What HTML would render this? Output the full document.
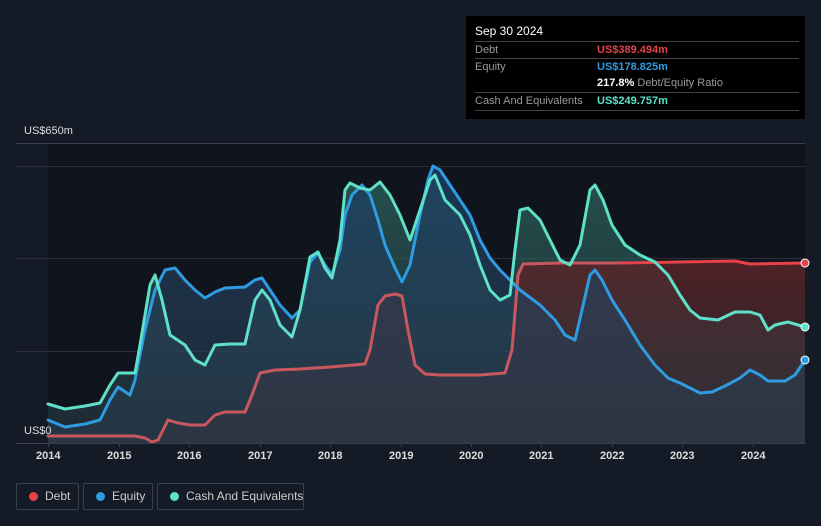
<!DOCTYPE html>
<html><head><meta charset="utf-8"><style>
body{margin:0;width:821px;height:526px;background:#151b26;font-family:"Liberation Sans",sans-serif;overflow:hidden;position:relative}
.tt{position:absolute;left:466px;top:16px;width:339px;height:103px;background:#000;color:#fff;font-size:11px}
.tt .h{position:absolute;left:9px;top:8px;font-size:12px}
.tt .r{position:absolute;left:9px;width:324px;border-top:1px solid #444;height:17px;line-height:17px;color:#999;white-space:nowrap}
.tt .v{position:absolute;left:122px;top:0;font-weight:bold}
.leg{position:absolute;top:483px;height:27px;border:1px solid #3a404a;border-radius:2px;color:#ccc;font-size:12px;line-height:25px;box-sizing:border-box;white-space:nowrap}
.leg i{position:absolute;left:12px;top:8px;width:9px;height:9px;border-radius:50%}
.leg span{position:absolute;left:28px;top:0}
.ax{position:absolute;top:450px;color:#ddd;font-size:11px;font-weight:bold}
</style></head><body>
<svg width="821" height="526" style="position:absolute;left:0;top:0">
<defs>
<linearGradient id="gd" x1="0" y1="0" x2="0" y2="1"><stop offset="0" stop-color="#5a2428" stop-opacity=".85"/><stop offset="1" stop-color="#3a3036" stop-opacity=".5"/></linearGradient>
<linearGradient id="ge" x1="0" y1="0" x2="0" y2="1"><stop offset="0" stop-color="#1b3f66" stop-opacity=".8"/><stop offset="1" stop-color="#2c3e50" stop-opacity=".5"/></linearGradient>
<linearGradient id="gc" x1="0" y1="0" x2="0" y2="1"><stop offset="0" stop-color="#2e6a62" stop-opacity=".7"/><stop offset="1" stop-color="#2e4a55" stop-opacity=".4"/></linearGradient>
</defs>
<rect x="48" y="143" width="757" height="300" fill="#10141c"/>
<g stroke="#2a2f38" stroke-width="1"><line x1="16" y1="143.5" x2="805" y2="143.5" stroke="#3a3f48"/><line x1="16" y1="166.5" x2="805" y2="166.5"/><line x1="16" y1="258.5" x2="805" y2="258.5"/><line x1="16" y1="351.5" x2="805" y2="351.5"/></g>
<polygon fill="url(#gc)" points="48,404 65,409 85,406 100,403 110,385 118,373 135,373 140,345 150,285 155,275 162,300 170,335 185,345 195,360 205,365 215,345 230,344 245,344 255,300 262,290 270,300 280,325 292,337 300,310 310,257 318,252 325,268 332,278 340,240 345,190 350,183 360,188 370,190 380,182 390,195 400,215 410,240 420,210 430,180 435,175 445,200 460,215 470,235 480,265 490,290 500,300 510,295 515,250 520,210 528,208 540,220 550,240 560,260 570,265 580,245 590,190 595,185 603,200 612,225 625,245 640,255 655,262 668,275 680,295 690,310 700,318 718,320 735,312 750,312 760,315 768,330 775,325 788,322 805,327 805,443 48,443"/>
<polygon fill="url(#gd)" points="48,436 100,436 135,436 145,438 152,442 158,440 168,420 178,423 190,425 205,425 215,415 225,412 245,412 252,395 260,373 275,370 300,369 330,367 365,364 370,350 378,305 385,296 395,294 402,296 408,330 415,365 425,374 440,375 480,375 505,373 512,350 518,275 523,264 560,263 620,263 680,262 735,261 750,264 805,263 805,443 48,443"/>
<polygon fill="url(#ge)" points="48,420 65,427 85,424 100,420 110,400 118,387 130,395 135,380 145,330 155,290 165,270 175,268 185,280 195,290 205,298 215,292 225,288 245,287 255,280 262,278 270,290 280,305 292,318 300,310 310,262 318,253 325,265 332,275 340,250 345,215 352,195 362,185 370,195 378,220 385,245 395,268 402,282 410,265 420,215 428,180 433,166 440,170 450,185 460,200 470,215 480,240 490,258 500,270 520,290 540,305 555,320 565,335 575,340 582,310 590,275 595,270 602,280 612,300 625,320 640,345 655,365 668,378 680,383 690,388 700,393 712,392 725,386 740,378 750,370 760,375 768,381 785,381 795,375 805,360 805,443 48,443"/>
<g fill="none" stroke-width="3" stroke-linejoin="round" stroke-linecap="round">
<polyline stroke="#c9585e" points="48,436 100,436 135,436 145,438 152,442 158,440 168,420 178,423 190,425 205,425 215,415 225,412 245,412 252,395 260,373 275,370 300,369 330,367 365,364 370,350 378,305 385,296 395,294 402,296 408,330 415,365 425,374 440,375 480,375 505,373 512,350 518,275 523,264 560,263 620,263"/>
<polyline stroke="#e5424a" points="620,263 680,262 735,261 750,264 805,263"/>
<polyline stroke="#2f9be0" points="48,420 65,427 85,424 100,420 110,400 118,387 130,395 135,380 145,330 155,290 165,270 175,268 185,280 195,290 205,298 215,292 225,288 245,287 255,280 262,278 270,290 280,305 292,318 300,310 310,262 318,253 325,265 332,275 340,250 345,215 352,195 362,185 370,195 378,220 385,245 395,268 402,282 410,265 420,215 428,180 433,166 440,170 450,185 460,200 470,215 480,240 490,258 500,270 520,290 540,305 555,320 565,335 575,340 582,310 590,275 595,270 602,280 612,300 625,320 640,345 655,365 668,378 680,383 690,388 700,393 712,392 725,386 740,378 750,370 760,375 768,381 785,381 795,375 805,360"/>
<polyline stroke="#5fe0c8" points="48,404 65,409 85,406 100,403 110,385 118,373 135,373 140,345 150,285 155,275 162,300 170,335 185,345 195,360 205,365 215,345 230,344 245,344 255,300 262,290 270,300 280,325 292,337 300,310 310,257 318,252 325,268 332,278 340,240 345,190 350,183 360,188 370,190 380,182 390,195 400,215 410,240 420,210 430,180 435,175 445,200 460,215 470,235 480,265 490,290 500,300 510,295 515,250 520,210 528,208 540,220 550,240 560,260 570,265 580,245 590,190 595,185 603,200 612,225 625,245 640,255 655,262 668,275 680,295 690,310 700,318 718,320 735,312 750,312 760,315 768,330 775,325 788,322 805,327"/>
</g>
<circle cx="805" cy="263" r="4" fill="#e5424a" stroke="#fff" stroke-width="1"/>
<circle cx="805" cy="327" r="4" fill="#5fe0c8" stroke="#fff" stroke-width="1"/>
<circle cx="805" cy="360" r="4" fill="#2f9be0" stroke="#fff" stroke-width="1"/>
<line x1="16" y1="443.5" x2="805" y2="443.5" stroke="#3a3f48"/>
<g stroke="#3a3f48"><line x1="48.5" y1="443" x2="48.5" y2="447"/><line x1="119.5" y1="443" x2="119.5" y2="447"/><line x1="189.5" y1="443" x2="189.5" y2="447"/><line x1="260.5" y1="443" x2="260.5" y2="447"/><line x1="330.5" y1="443" x2="330.5" y2="447"/><line x1="401.5" y1="443" x2="401.5" y2="447"/><line x1="471.5" y1="443" x2="471.5" y2="447"/><line x1="541.5" y1="443" x2="541.5" y2="447"/><line x1="612.5" y1="443" x2="612.5" y2="447"/><line x1="682.5" y1="443" x2="682.5" y2="447"/><line x1="753.5" y1="443" x2="753.5" y2="447"/></g>
</svg>
<div style="position:absolute;left:24px;top:125px;color:#ddd;font-size:11px">US$650m</div>
<div style="position:absolute;left:24px;top:425px;color:#ddd;font-size:11px">US$0</div>
<div class="ax" style="left:36px">2014</div><div class="ax" style="left:107px">2015</div><div class="ax" style="left:177px">2016</div><div class="ax" style="left:248px">2017</div><div class="ax" style="left:318px">2018</div><div class="ax" style="left:389px">2019</div><div class="ax" style="left:459px">2020</div><div class="ax" style="left:529px">2021</div><div class="ax" style="left:600px">2022</div><div class="ax" style="left:670px">2023</div><div class="ax" style="left:741px">2024</div>
<div class="tt">
<div class="h">Sep 30 2024</div>
<div class="r" style="top:25px">Debt<span class="v" style="color:#e5424a">US$389.494m</span></div>
<div class="r" style="top:42px">Equity<span class="v" style="color:#2f9be0">US$178.825m</span></div>
<div class="r" style="top:59px;border-top:none"><span class="v" style="color:#fff">217.8% <span style="color:#999;font-weight:normal">Debt/Equity Ratio</span></span></div>
<div class="r" style="top:76px">Cash And Equivalents<span class="v" style="color:#5fe0c8">US$249.757m</span></div>
<div style="position:absolute;left:9px;top:94px;width:324px;border-top:1px solid #444"></div>
</div>
<div class="leg" style="left:16px;width:63px"><i style="background:#e5424a"></i><span>Debt</span></div>
<div class="leg" style="left:83px;width:70px"><i style="background:#2f9be0"></i><span>Equity</span></div>
<div class="leg" style="left:157px;width:147px"><i style="background:#5fe0c8"></i><span>Cash And Equivalents</span></div>
</body></html>
